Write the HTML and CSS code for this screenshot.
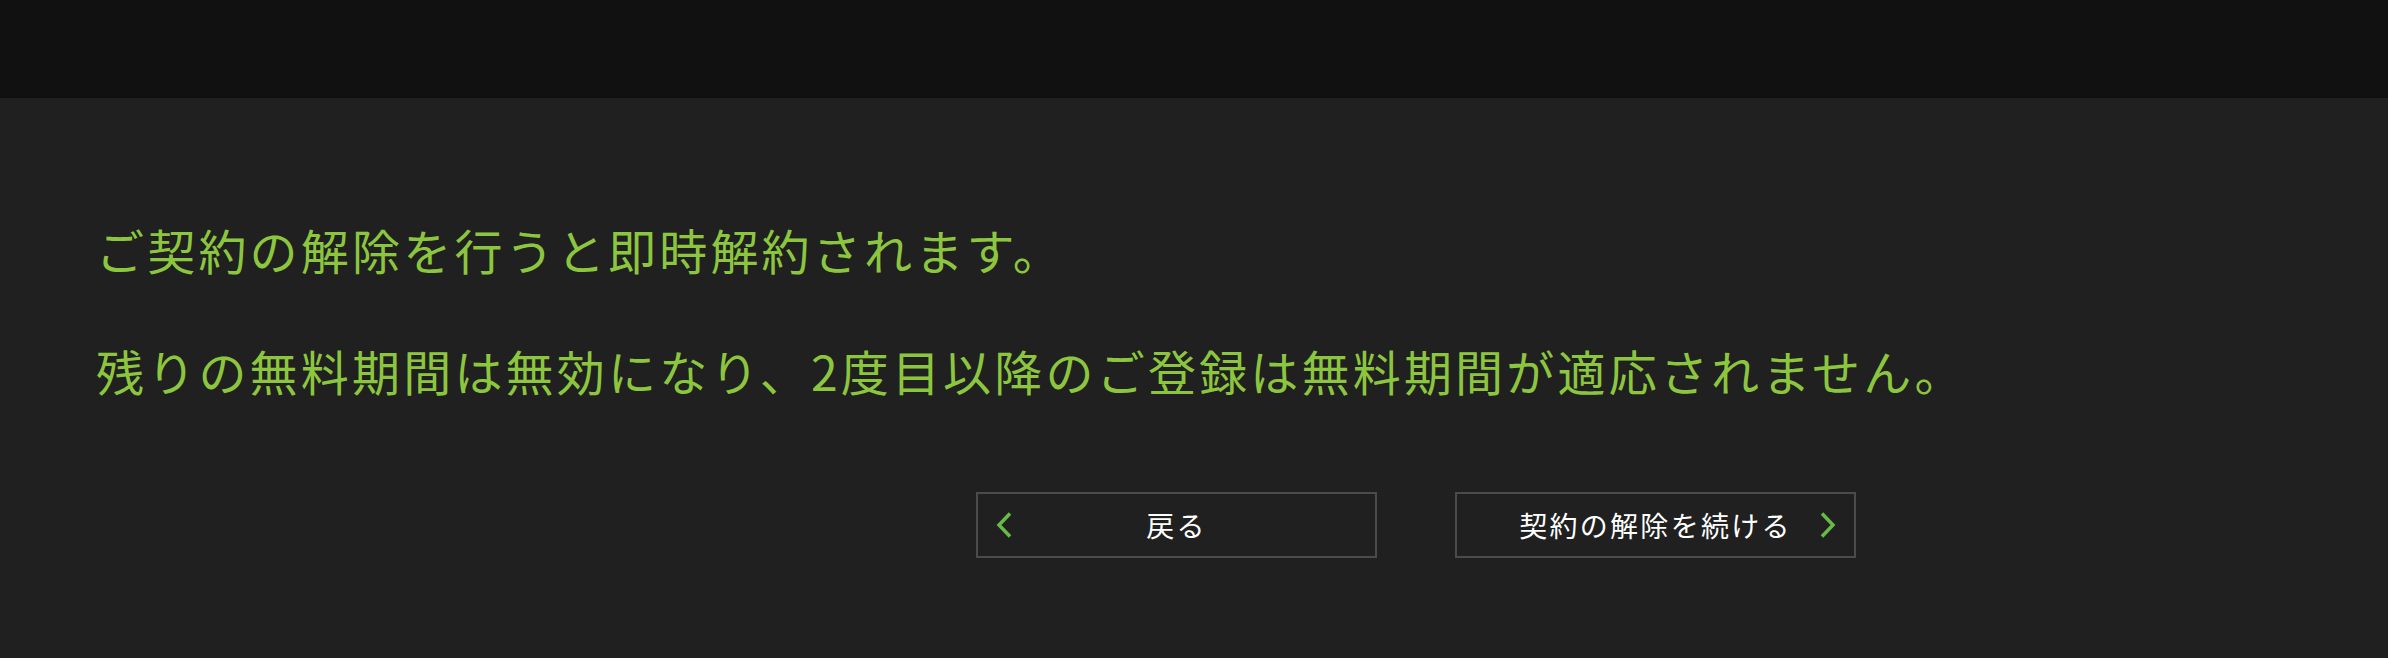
FILE: index.html
```html
<!DOCTYPE html>
<html lang="ja">
<head>
<meta charset="utf-8">
<title>解約確認</title>
<link rel="stylesheet" href="styles.css">
</head>
<body>
<header class="topbar"></header>
<main class="content">
  <p class="notice">ご契約の解除を行うと即時解約されます。</p>
  <p class="notice">残りの無料期間は無効になり、2度目以降のご登録は無料期間が適応されません。</p>
  <div class="actions">
    <a class="btn btn-back" href="#">
      <svg class="chev chev-left" width="16" height="26" viewBox="0 0 16 26"><polyline points="14,1.5 3,13 14,24.5" fill="none" stroke="#66bb44" stroke-width="3.5"/></svg>
      <span class="btn-label">戻る</span>
    </a>
    <a class="btn btn-next" href="#">
      <span class="btn-label">契約の解除を続ける</span>
      <svg class="chev chev-right" width="16" height="26" viewBox="0 0 16 26"><polyline points="2,1.5 13,13 2,24.5" fill="none" stroke="#66bb44" stroke-width="3.5"/></svg>
    </a>
  </div>
</main>
</body>
</html>
```

FILE: styles.css
```css
html, body {
  margin: 0;
  padding: 0;
  background: #202020;
  font-family: "Noto Sans CJK JP", "Noto Sans", sans-serif;
}

.topbar {
  height: 98px;
  background: #111111;
}

.content {
  padding: 121px 0 0 96px;
}

.notice {
  margin: 0 0 61px 0;
  font-size: 48px;
  line-height: 60px;
  letter-spacing: 3.2px;
  color: #8cc63f;
  white-space: nowrap;
}

.actions {
  display: flex;
  gap: 78px;
  padding-left: 880px;
  margin-top: 92px;
}

.btn {
  position: relative;
  box-sizing: border-box;
  width: 401px;
  height: 66px;
  border: 2px solid #4b4b4b;
  display: flex;
  align-items: center;
  justify-content: center;
  text-decoration: none;
  color: #ffffff;
}

.btn-label {
  font-size: 28px;
  letter-spacing: 2.3px;
  line-height: 1;
}

.chev {
  position: absolute;
  top: 18px;
}

.chev-left {
  left: 18px;
}

.chev-right {
  right: 18px;
}
```
